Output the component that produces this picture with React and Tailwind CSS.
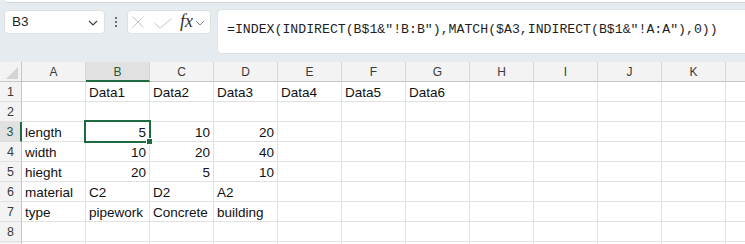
import React from "react";

const COLS = ["A", "B", "C", "D", "E", "F", "G", "H", "I", "J", "K", "L"];

const ROWS = [
  { n: 1, cells: { B: "Data1", C: "Data2", D: "Data3", E: "Data4", F: "Data5", G: "Data6" } },
  { n: 2, cells: {} },
  { n: 3, cells: { A: "length", B: 5, C: 10, D: 20 } },
  { n: 4, cells: { A: "width", B: 10, C: 20, D: 40 } },
  { n: 5, cells: { A: "hieght", B: 20, C: 5, D: 10 } },
  { n: 6, cells: { A: "material", B: "C2", C: "D2", D: "A2" } },
  { n: 7, cells: { A: "type", B: "pipework", C: "Concrete", D: "building" } },
  { n: 8, cells: {} },
  { n: 9, cells: {} },
];

const cellFont = { fontFamily: '"Liberation Sans", Arial, sans-serif' };

function Toolbar() {
  return (
    <div className="flex items-start h-[59px] shrink-0 pt-[6px]">
      {/* Name box */}
      <div className="ml-[4px] mt-[1px] w-[101px] shrink-0 h-[24px] bg-white rounded-[4px] border border-[#dde2e5] flex items-center justify-between pl-[7px] pr-[6px]">
        <span className="text-[13.5px] text-[#1f1f1f]" style={cellFont}>B3</span>
        <svg width="10" height="6" viewBox="0 0 10 6" className="mt-[1px]">
          <path d="M1 1 L5 5 L9 1" fill="none" stroke="#424242" strokeWidth="1.2" />
        </svg>
      </div>
      {/* dots */}
      <div className="w-[22px] shrink-0 h-[26px] flex flex-col items-center justify-center gap-[2px]">
        <div className="w-[2px] h-[2px] bg-[#424242] rounded-full" />
        <div className="w-[2px] h-[2px] bg-[#424242] rounded-full" />
        <div className="w-[2px] h-[2px] bg-[#424242] rounded-full" />
      </div>
      {/* fx box */}
      <div className="mt-[1px] w-[84px] shrink-0 h-[24px] bg-white rounded-[4px] border border-[#dde2e5] flex items-center pl-[4px]">
        <svg width="12" height="12" viewBox="0 0 12 12" className="shrink-0">
          <path d="M0.5 0.5 L11.5 11.5 M11.5 0.5 L0.5 11.5" stroke="#c4c4c4" strokeWidth="1" fill="none" />
        </svg>
        <svg width="18" height="11" viewBox="0 0 18 11" className="ml-[10px] mt-[2px] shrink-0">
          <path d="M0.5 5 L6 10.3 L17.5 0.5" stroke="#c4c4c4" strokeWidth="1" fill="none" />
        </svg>
        <span
          className="ml-[8px] text-[18px] italic text-[#303030] leading-none -mt-[2px]"
          style={{ fontFamily: '"Liberation Serif", "Times New Roman", serif' }}
        >
          fx
        </span>
        <svg width="10" height="6" viewBox="0 0 10 6" className="ml-[2px] mt-[1px] shrink-0">
          <path d="M1 1 L5 5 L9 1" fill="none" stroke="#8a8a8a" strokeWidth="1" />
        </svg>
      </div>
      {/* formula */}
      <div className="ml-[6px] w-[560px] shrink-0 h-[45px] bg-white rounded-[5px] border border-[#dde2e5] pl-[9px] pt-[5px]">
        <span
          className="text-[13.2px] leading-[18px] text-[#1e1e1e] whitespace-pre"
          style={{ fontFamily: '"Liberation Mono", "Courier New", monospace' }}
        >
          {'=INDEX(INDIRECT(B$1&"!B:B"),MATCH($A3,INDIRECT(B$1&"!A:A"),0))'}
        </span>
      </div>
    </div>
  );
}

function HeaderRow() {
  return (
    <div className="flex h-[20px] shrink-0">
      <div className="relative w-[22px] shrink-0 h-[20px] bg-[#f3f3f3] border-r border-b border-[#c6c6c6]">
        <svg width="12" height="12" viewBox="0 0 12 12" className="absolute left-[6px] top-[5px]">
          <path d="M12 0 L12 12 L0 12 Z" fill="#d4d4d4" />
        </svg>
      </div>
      {COLS.map((c) => {
        const active = c === "B";
        return (
          <div
            key={c}
            className={
              active
                ? "w-[64px] shrink-0 h-[20px] bg-[#e1e1e1] border-r border-[#d4d4d4] border-b-2 border-b-[#1d6b40] flex items-center justify-center text-[12px] text-[#1d5c38]"
                : "w-[64px] shrink-0 h-[20px] bg-[#f3f3f3] border-r border-[#d9d9d9] border-b border-b-[#c6c6c6] flex items-center justify-center text-[12px] text-[#3a3a3a]"
            }
            style={cellFont}
          >
            {c === "L" ? null : <span className="pt-[1px]">{c}</span>}
          </div>
        );
      })}
    </div>
  );
}

function Row({ row }) {
  const active = row.n === 3;
  return (
    <div className="flex h-[20px] shrink-0">
      <div
        className={
          active
            ? "w-[22px] shrink-0 h-[20px] bg-[#e1e1e1] border-r-2 border-r-[#1d6b40] border-b border-b-[#dcdcdc] flex items-end justify-center text-[12.5px] leading-[17px] text-[#1d5c38]"
            : "w-[22px] shrink-0 h-[20px] bg-[#f3f3f3] border-r border-r-[#c6c6c6] border-b border-b-[#e1e1e1] flex items-end justify-center text-[12.5px] leading-[17px] text-[#3a3a3a]"
        }
        style={cellFont}
      >
        {row.n === 9 ? "" : row.n}
      </div>
      {COLS.map((c) => {
        const v = row.cells[c];
        const isNum = typeof v === "number";
        const selected = active && c === "B";
        return (
          <div
            key={c}
            className={
              "relative w-[64px] shrink-0 h-[20px] bg-white border-r border-b border-[#e1e1e1] flex items-end text-[13.5px] leading-[17px] text-[#111] px-[3px] whitespace-nowrap " +
              (isNum ? "justify-end" : "justify-start") +
              (selected ? " z-10" : "")
            }
            style={cellFont}
          >
            {v !== undefined ? <span>{v}</span> : null}
            {selected ? (
              <div className="absolute -left-[2px] -top-[2px] w-[67px] h-[23px] border-2 border-[#1d6b40]">
                <div className="absolute -right-[4px] -bottom-[4px] w-[7px] h-[7px] bg-[#1d6b40] border border-white" />
              </div>
            ) : null}
          </div>
        );
      })}
    </div>
  );
}

export default function App() {
  return (
    <div className="w-[745px] h-[244px] overflow-hidden bg-[#e5ebee] flex flex-col">
      <div className="ml-[5px] h-[3px] shrink-0 bg-white border-b border-[#cfd5d8] rounded-bl-[4px]" />
      <Toolbar />
      <div className="bg-white shrink-0">
        <HeaderRow />
        {ROWS.map((r) => (
          <Row key={r.n} row={r} />
        ))}
      </div>
    </div>
  );
}
